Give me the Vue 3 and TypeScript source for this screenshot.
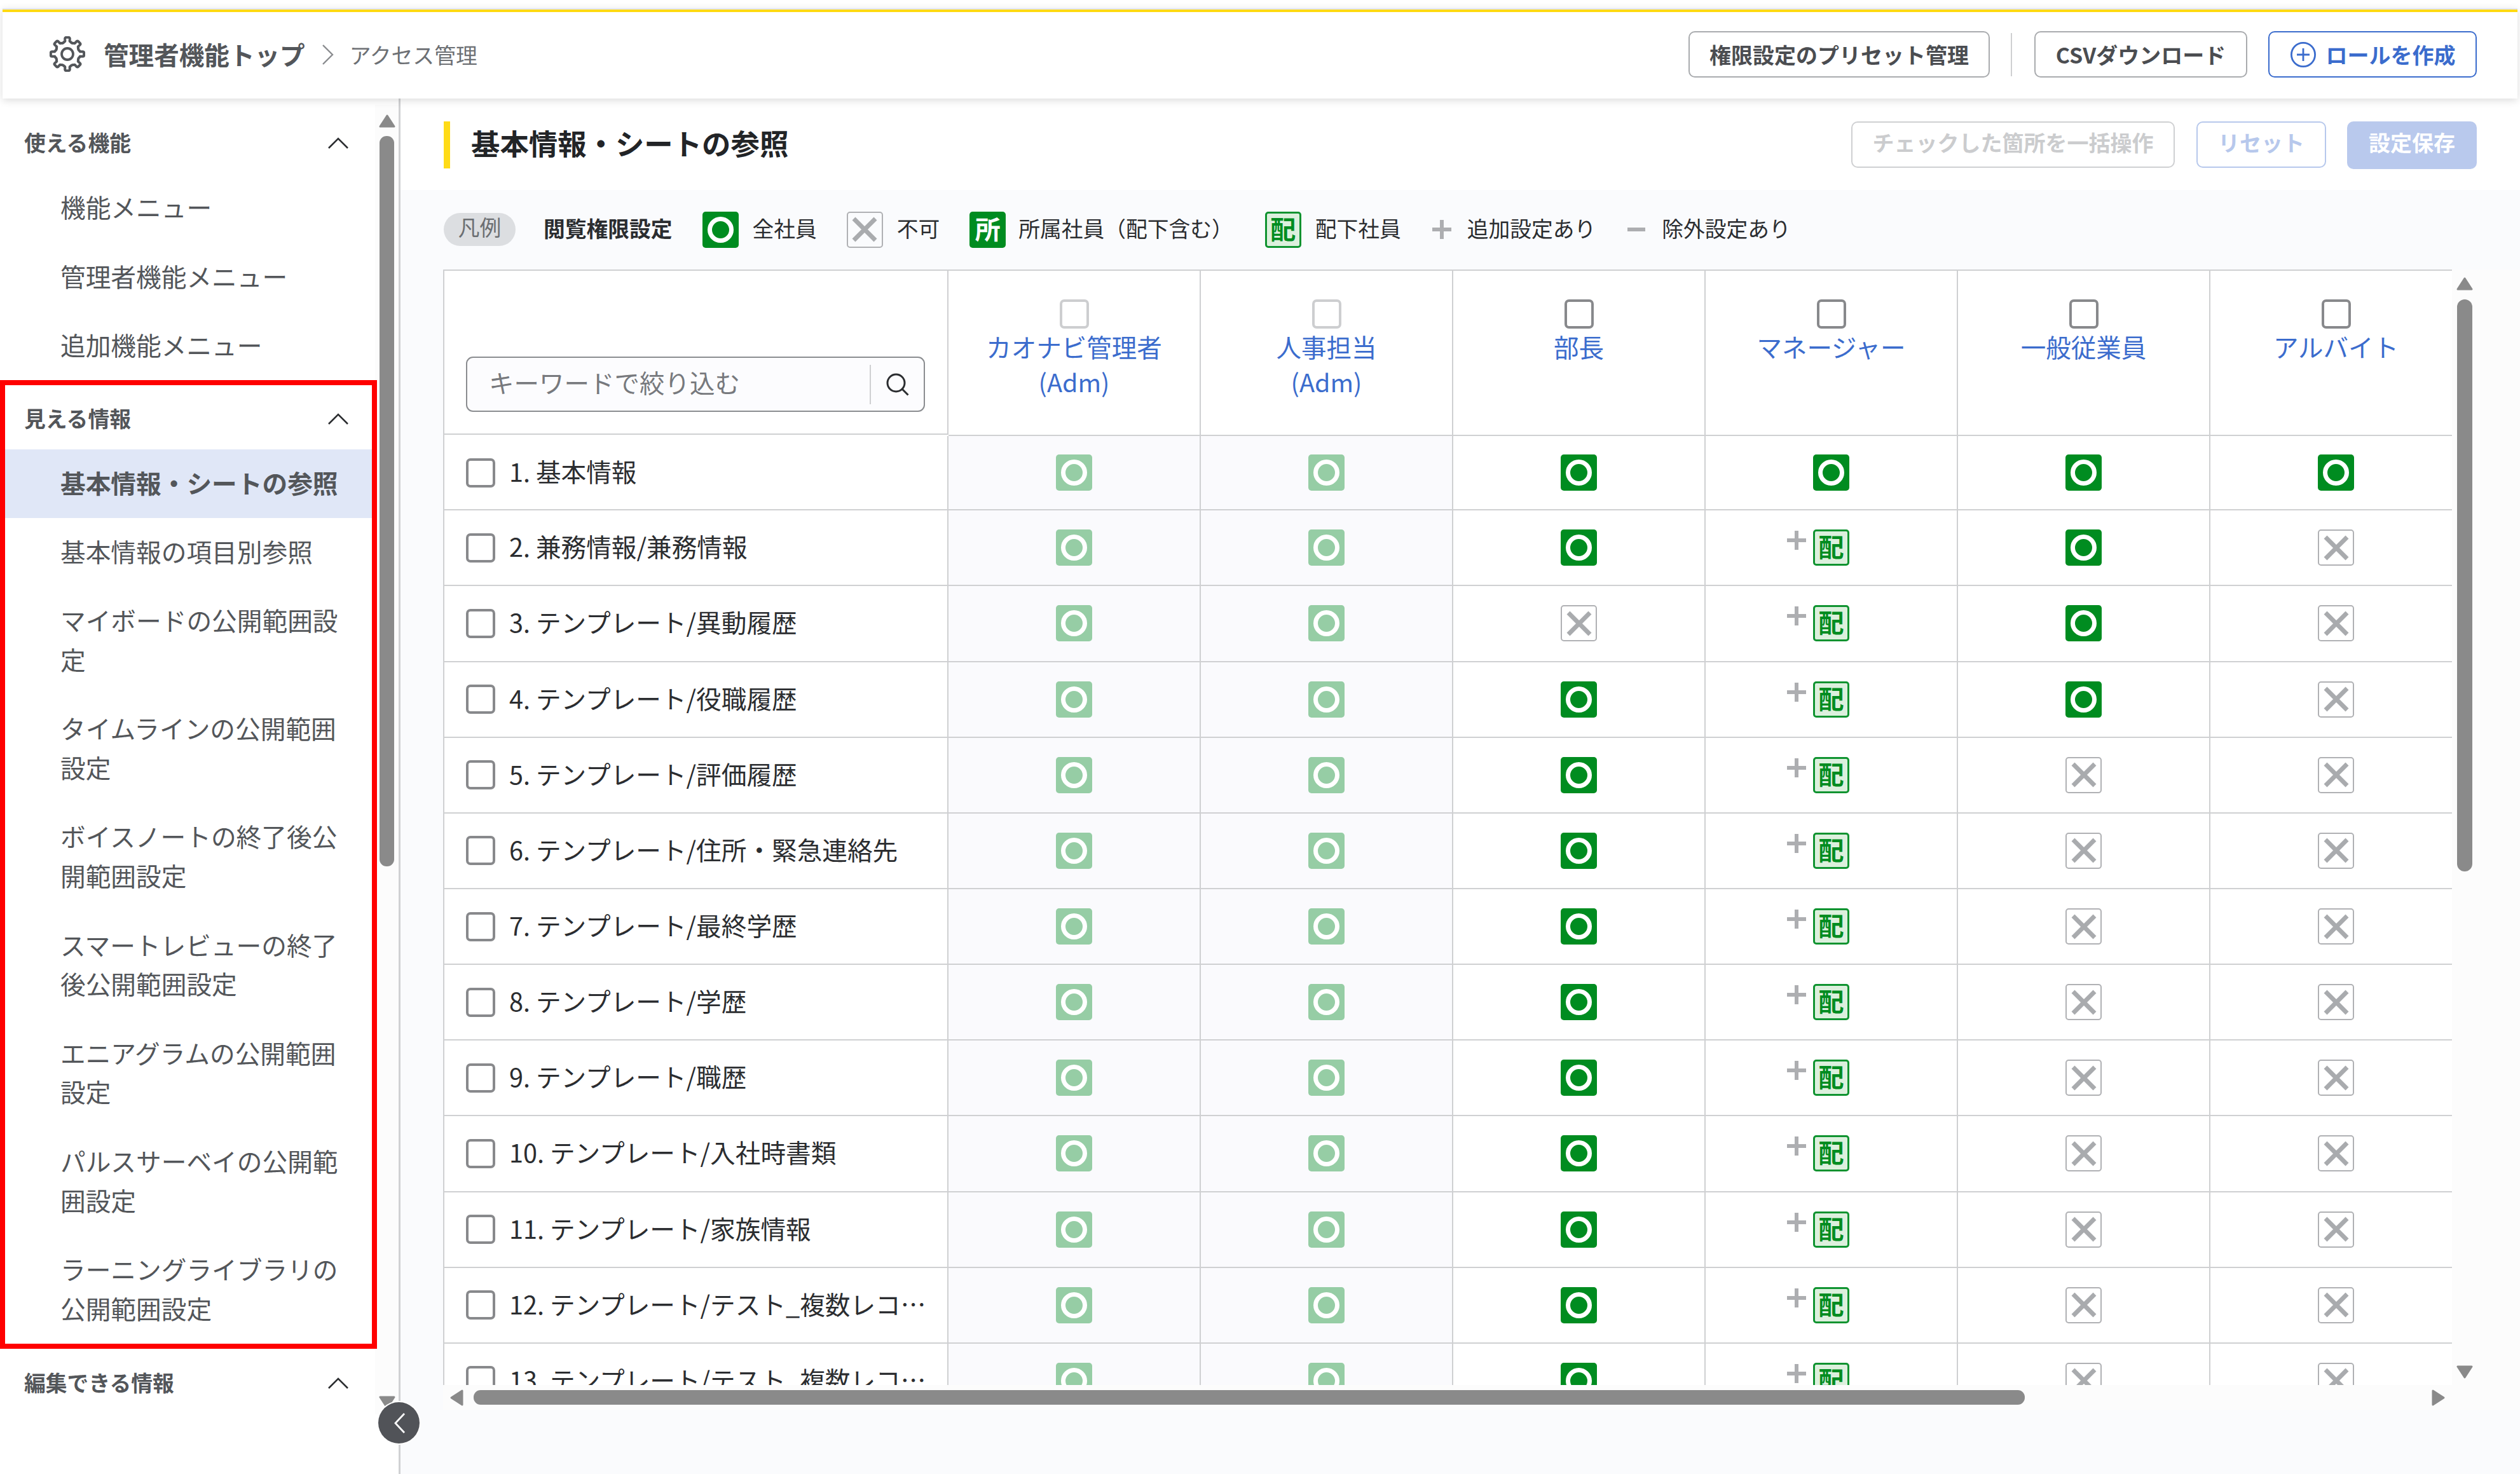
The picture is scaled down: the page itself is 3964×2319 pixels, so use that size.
<script setup lang="ts">
type Mark = 'all' | 'none' | 'sub'

interface MenuSection {
  title: string
  items: string[]
  highlighted?: boolean
}

interface Role {
  name: string
  suffix?: string
  locked?: boolean
}

const sections: MenuSection[] = [
  { title: '使える機能', items: ['機能メニュー', '管理者機能メニュー', '追加機能メニュー'] },
  {
    title: '見える情報',
    highlighted: true,
    items: [
      '基本情報・シートの参照',
      '基本情報の項目別参照',
      'マイボードの公開範囲設定',
      'タイムラインの公開範囲設定',
      'ボイスノートの終了後公開範囲設定',
      'スマートレビューの終了後公開範囲設定',
      'エニアグラムの公開範囲設定',
      'パルスサーベイの公開範囲設定',
      'ラーニングライブラリの公開範囲設定',
    ],
  },
  { title: '編集できる情報', items: [] },
]
const activeItem = '基本情報・シートの参照'

const roles: Role[] = [
  { name: 'カオナビ管理者', suffix: '(Adm)', locked: true },
  { name: '人事担当', suffix: '(Adm)', locked: true },
  { name: '部長' },
  { name: 'マネージャー' },
  { name: '一般従業員' },
  { name: 'アルバイト' },
]

const labels = [
  '基本情報',
  '兼務情報/兼務情報',
  'テンプレート/異動履歴',
  'テンプレート/役職履歴',
  'テンプレート/評価履歴',
  'テンプレート/住所・緊急連絡先',
  'テンプレート/最終学歴',
  'テンプレート/学歴',
  'テンプレート/職歴',
  'テンプレート/入社時書類',
  'テンプレート/家族情報',
  'テンプレート/テスト_複数レコ…',
  'テンプレート/テスト_複数レコ…',
]

const rows = labels.map((label, i) => ({
  label: `${i + 1}. ${label}`,
  marks: [
    'all',
    'all',
    i === 2 ? 'none' : 'all',
    i === 0 ? 'all' : 'sub',
    i < 4 ? 'all' : 'none',
    i === 0 ? 'all' : 'none',
  ] as Mark[],
}))

// Eight-toothed cog outline, centred on (28, 28)
function cogPath(): string {
  const pt = (r: number, deg: number) => {
    const a = (deg * Math.PI) / 180
    return `${(28 + r * Math.sin(a)).toFixed(2)} ${(28 - r * Math.cos(a)).toFixed(2)}`
  }
  let d = ''
  for (let k = 0; k < 8; k++) {
    const c = k * 45
    d += `${k === 0 ? 'M' : 'L'}${pt(20.2, c - 13)} `
    d += `Q${pt(19.6, c - 10)} ${pt(22.4, c - 9.5)} L${pt(24.6, c - 9)} `
    d += `Q${pt(26.4, c - 8)} ${pt(26.2, c - 4)} L${pt(26.2, c + 4)} `
    d += `Q${pt(26.4, c + 8)} ${pt(24.6, c + 9)} L${pt(22.4, c + 9.5)} `
    d += `Q${pt(19.6, c + 10)} ${pt(20.2, c + 13)} Q${pt(17.6, c + 22.5)} ${pt(20.2, c + 32)} `
  }
  return d + 'Z'
}
const cog = cogPath()
</script>

<template>
  <div class="app">
    <header class="topbar">
      <svg class="cog" viewBox="0 0 56 56">
        <path :d="cog" fill="none" stroke="#53565a" stroke-width="4" stroke-linejoin="round" />
        <circle cx="28" cy="28" r="9" fill="none" stroke="#53565a" stroke-width="3.8" />
      </svg>
      <span class="crumb-root">管理者機能トップ</span>
      <svg class="crumb-sep" viewBox="0 0 20 34">
        <path d="M2 2 L17 17 L2 32" fill="none" stroke="#8b8d90" stroke-width="2.4" />
      </svg>
      <span class="crumb-leaf">アクセス管理</span>
      <div class="actions">
        <button class="btn preset">権限設定のプリセット管理</button>
        <i class="split"></i>
        <button class="btn csv">CSVダウンロード</button>
        <button class="btn create">
          <svg viewBox="0 0 42 42">
            <circle cx="21" cy="21" r="18.6" fill="none" stroke="#3b6ccd" stroke-width="2.8" />
            <path d="M21 11V31M11 21H31" stroke="#3b6ccd" stroke-width="2.8" />
          </svg>
          <span>ロールを作成</span>
        </button>
      </div>
    </header>

    <div class="body">
      <aside class="sidebar">
        <nav class="menu">
          <section v-for="s in sections" :key="s.title" :class="['group', { boxed: s.highlighted }]">
            <h2 class="group-title">
              <span>{{ s.title }}</span>
              <svg viewBox="0 0 34 20">
                <path d="M2 18 L17 3 L32 18" fill="none" stroke="#2b2d30" stroke-width="2.6" />
              </svg>
            </h2>
            <a v-for="item in s.items" :key="item" :class="['item', { active: item === activeItem }]">{{ item }}</a>
          </section>
        </nav>
        <div class="side-scroll">
          <svg class="arrow" viewBox="0 0 26 21"><path d="M13 2 L24 19 H2 Z" /></svg>
          <div class="side-thumb"></div>
          <svg class="arrow side-down" viewBox="0 0 26 21"><path d="M2 2 H24 L13 19 Z" /></svg>
        </div>
        <button class="collapse">
          <svg viewBox="0 0 20 34"><path d="M17 2 L3 17 L17 32" fill="none" stroke="#fff" stroke-width="2.8" /></svg>
        </button>
      </aside>

      <main class="main">
        <div class="heading">
          <h1>基本情報・シートの参照</h1>
          <div class="heading-actions">
            <button class="btn bulk">チェックした箇所を一括操作</button>
            <button class="btn reset">リセット</button>
            <button class="btn save">設定保存</button>
          </div>
        </div>

        <div class="legend">
          <span class="chip">凡例</span>
          <b>閲覧権限設定</b>
          <span class="mark all g47"><i></i></span><span class="t g22">全社員</span>
          <span class="mark none g47"><svg viewBox="0 0 56 56"><path d="M11 11 L45 45 M45 11 L11 45" /></svg></span><span class="t g22">不可</span>
          <span class="mark own g47">所</span><span class="t g20">所属社員（配下含む）</span>
          <span class="mark sub g50">配</span><span class="t g22">配下社員</span>
          <svg class="sign g49" viewBox="0 0 30 30"><path d="M15 0V30M0 15H30" /></svg><span class="t g25">追加設定あり</span>
          <svg class="sign g49" viewBox="0 0 30 30"><path d="M1 15H29" /></svg><span class="t g25">除外設定あり</span>
        </div>

        <div class="grid-box">
          <div class="viewport">
            <div class="grid">
              <div class="row head">
                <div class="cell first">
                  <div class="search">
                    <span>キーワードで絞り込む</span>
                    <i></i>
                    <svg viewBox="0 0 38 38">
                      <circle cx="16.5" cy="16.5" r="13.5" />
                      <path d="M26 26 L35.5 35.5" />
                    </svg>
                  </div>
                </div>
                <div v-for="r in roles" :key="r.name" class="cell role">
                  <i :class="['check', { off: r.locked }]"></i>
                  <a>{{ r.name }}<template v-if="r.suffix"><br />{{ r.suffix }}</template></a>
                </div>
              </div>
              <div v-for="row in rows" :key="row.label" class="row">
                <div class="cell first">
                  <i class="check"></i>
                  <span class="label">{{ row.label }}</span>
                </div>
                <div v-for="(m, c) in row.marks" :key="c" :class="['cell', { locked: roles[c].locked }]">
                  <span v-if="m === 'all'" class="mark all"><i></i></span>
                  <span v-else-if="m === 'none'" class="mark none">
                    <svg viewBox="0 0 56 56"><path d="M11 11 L45 45 M45 11 L11 45" /></svg>
                  </span>
                  <span v-else class="mark sub">
                    配
                    <svg class="sign plus" viewBox="0 0 30 30"><path d="M15 0V30M0 15H30" /></svg>
                  </span>
                </div>
              </div>
            </div>
          </div>
          <div class="v-scroll">
            <svg class="arrow" viewBox="0 0 26 21"><path d="M13 2 L24 19 H2 Z" /></svg>
            <div class="v-thumb"></div>
            <svg class="arrow v-down" viewBox="0 0 26 21"><path d="M2 2 H24 L13 19 Z" /></svg>
          </div>
          <div class="h-scroll">
            <svg class="h-arrow" viewBox="0 0 21 26"><path d="M19 2 V24 L2 13 Z" /></svg>
            <div class="h-thumb"></div>
            <svg class="h-arrow h-right" viewBox="0 0 21 26"><path d="M2 2 V24 L19 13 Z" /></svg>
          </div>
        </div>
      </main>
    </div>
  </div>
</template>

<style>
body {
  margin: 0;
  background: #fff;
  overflow: hidden;
}
</style>

<style scoped>
.app {
  width: 3964px;
  height: 2319px;
  display: flex;
  flex-direction: column;
  overflow: hidden;
  font-family: 'Noto Sans CJK JP', 'Noto Sans', sans-serif;
  color: #2b2d30;
  background: #fff;
}
.app *,
.app *::after {
  box-sizing: border-box;
}
i {
  display: block;
  flex: none;
}
svg {
  display: block;
  flex: none;
}
button {
  font-family: inherit;
  padding: 0;
  margin: 0;
}

/* top bar */
.topbar {
  flex: none;
  height: 142px;
  margin: 13px 4px 0;
  padding: 1px 64px 0 74px;
  border-top: 2px solid #e3e7f5;
  box-shadow: inset 0 4px 0 #ffda12, 0 3px 12px rgba(0, 0, 0, 0.14);
  background: #fff;
  display: flex;
  align-items: center;
  position: relative;
  z-index: 2;
}
.cog {
  width: 56px;
  height: 56px;
  margin-bottom: 2px;
}
.crumb-root {
  margin-left: 29px;
  font-size: 39.6px;
  font-weight: 700;
  color: #53565a;
  padding-bottom: 3px;
}
.crumb-sep {
  width: 20px;
  height: 34px;
  margin-left: 26px;
}
.crumb-leaf {
  margin-left: 24px;
  font-size: 33.8px;
  color: #6d7074;
  padding-bottom: 1px;
}
.actions {
  margin-left: auto;
  display: flex;
  align-items: center;
}
.btn {
  height: 73px;
  border: 2px solid #a9abae;
  border-radius: 10px;
  background: #fff;
  color: #4b4d51;
  font-size: 34px;
  font-weight: 700;
  display: flex;
  align-items: center;
  justify-content: center;
  white-space: nowrap;
}
.preset {
  width: 474px;
}
.split {
  width: 2px;
  height: 68px;
  background: #cfd0d2;
  margin: 0 35px 0 33px;
}
.csv {
  width: 335px;
}
.create {
  width: 328px;
  margin-left: 33px;
  border-color: #3b6ccd;
  color: #3b6ccd;
}
.create svg {
  width: 42px;
  height: 42px;
  margin-right: 15px;
}

/* side menu */
.body {
  flex: 1;
  display: flex;
  min-height: 0;
}
.sidebar {
  width: 630px;
  flex: none;
  display: flex;
  border-right: 3px solid #d0d1d3;
  position: relative;
}
.menu {
  width: 590px;
  padding-top: 10px;
}
.group {
  position: relative;
}
.group.boxed::after {
  content: '';
  position: absolute;
  left: 0;
  top: 0;
  width: 593px;
  bottom: -8px;
  border: 8px solid #f00;
}
.group-title {
  margin: 0;
  height: 108.5px;
  padding: 9px 0 0 38px;
  display: flex;
  align-items: center;
  font-size: 33.8px;
  font-weight: 700;
  color: #53565a;
}
.group:last-child .group-title {
  padding-top: 12px;
}
.group-title svg {
  width: 34px;
  height: 20px;
  margin: 3px 41px 0 auto;
}
.item {
  display: block;
  padding: 20.75px 54px 25.75px 95px;
  font-size: 39.7px;
  line-height: 61.8px;
  color: #53565a;
  word-break: break-all;
  line-break: anywhere;
}
.item.active {
  background: #e0e7f7;
  font-weight: 700;
}
.side-scroll {
  width: 37px;
  height: 2060px;
  margin-top: 10px;
  padding-top: 15px;
  background: #fcfcfc;
  display: flex;
  flex-direction: column;
  align-items: center;
}
.arrow {
  width: 26px;
  height: 21px;
}
.arrow path,
.h-arrow path {
  fill: #8a8a8a;
  stroke: #8a8a8a;
  stroke-width: 3;
  stroke-linejoin: round;
}
.side-thumb {
  width: 23px;
  height: 1149px;
  margin-top: 13px;
  border-radius: 11px;
  background: #8a8a8a;
}
.side-down {
  margin-top: 833px;
}
.collapse {
  position: absolute;
  left: 595px;
  top: 2051px;
  width: 65px;
  height: 65px;
  border-radius: 50%;
  border: 0;
  background: #515358;
  box-shadow: 0 0 0 2px #fff;
  display: flex;
  align-items: center;
  justify-content: center;
}
.collapse svg {
  width: 20px;
  height: 34px;
  margin-left: 2px;
}

/* main area */
.main {
  flex: 1;
  min-width: 0;
  background: #fafbfd;
  display: flex;
  flex-direction: column;
}
.heading {
  flex: none;
  height: 144px;
  padding: 36px 68px 0;
  background: #fff;
  display: flex;
  align-items: flex-start;
  justify-content: space-between;
}
h1 {
  margin: 0;
  height: 74px;
  line-height: 66px;
  padding-left: 33px;
  border-left: 10px solid #ffdb17;
  font-size: 45.4px;
  font-weight: 700;
  color: #222427;
}
.heading-actions {
  display: flex;
  align-items: flex-start;
}
.heading-actions .btn {
  padding-bottom: 8px;
}
.bulk {
  width: 509px;
  border-color: #cfd0d2;
  color: #cbccce;
}
.reset {
  width: 204px;
  margin-left: 34px;
  border-color: #b7c8ec;
  color: #b7c8ec;
}
.heading-actions .save {
  width: 204px;
  height: 75px;
  margin-left: 33px;
  border: 0;
  padding-bottom: 10px;
  background: #b9c9ed;
  color: #fff;
}
.legend {
  flex: none;
  height: 125px;
  padding: 0 0 1px 68px;
  display: flex;
  align-items: center;
  font-size: 33.75px;
  line-height: 50px;
  white-space: nowrap;
}
.chip {
  width: 113px;
  height: 52px;
  border-radius: 26px;
  background: #dcdee1;
  color: #6b6e72;
  text-align: center;
  line-height: 44px;
}
.legend b {
  margin-left: 44px;
}
.legend b,
.legend .t {
  padding-bottom: 4px;
}
.g20 { margin-left: 20px; }
.g22 { margin-left: 22px; }
.g25 { margin-left: 25px; }
.g47 { margin-left: 47px; }
.g49 { margin-left: 49px; }
.g50 { margin-left: 50px; }

.mark {
  flex: none;
  width: 57px;
  height: 57px;
  border-radius: 5px;
  display: flex;
  align-items: center;
  justify-content: center;
  font-size: 40px;
  font-weight: 700;
  line-height: 52px;
  position: relative;
}
.mark.all {
  background: #008c20;
}
.mark.all i {
  width: 41px;
  height: 41px;
  border: 7px solid #fff;
  border-radius: 50%;
}
.mark.own {
  background: #008c20;
  color: #fff;
  padding-bottom: 5px;
}
.mark.sub {
  background: #dcf0dd;
  border: 3px solid #0f9330;
  color: #008c20;
  padding-bottom: 5px;
}
.mark.none {
  border: 2px solid #b0b1b4;
}
.mark.none svg {
  width: 56px;
  height: 56px;
}
.mark.none path {
  stroke: #a9abae;
  stroke-width: 7;
}
.sign {
  width: 30px;
  height: 30px;
}
.sign path {
  stroke: #adaeb1;
  stroke-width: 6;
}
.plus {
  position: absolute;
  left: -44px;
  top: -1px;
}

/* permission grid */
.grid-box {
  display: grid;
  grid-template-columns: 3160px 39px;
  grid-template-rows: 1755px 39px;
  margin-left: 67px;
  background: #fcfcfc;
}
.viewport {
  overflow: hidden;
  background: #fff;
  border-top: 2px solid #cfd0d2;
  border-left: 2px solid #cfd0d2;
}
.grid {
  width: 3175px;
}
.row {
  display: grid;
  grid-template-columns: 793px repeat(6, 397px);
  height: 119.15px;
}
.row.head {
  height: 260px;
}
.row:nth-child(2) {
  height: 117.25px;
}
.cell {
  border-right: 2px solid #cfd0d2;
  border-bottom: 2px solid #cfd0d2;
  display: flex;
  align-items: center;
  justify-content: center;
  min-width: 0;
}
.cell.first {
  justify-content: flex-start;
  padding-left: 34px;
}
.cell.locked {
  background: #fafafd;
}
.cell.locked .mark {
  background: #96cda5;
}
.head .first {
  height: 258px;
  align-items: flex-end;
  padding-bottom: 34px;
}
.head .role {
  flex-direction: column;
  justify-content: flex-start;
  padding-top: 45px;
}
.role a {
  margin-top: 1px;
  font-size: 39.5px;
  line-height: 54.5px;
  color: #3b6ccd;
  text-align: center;
}
.check {
  width: 46px;
  height: 46px;
  border: 4px solid #88898c;
  border-radius: 7px;
  background: #fff;
}
.check.off {
  border-color: #cdced0;
}
.label {
  margin-left: 22px;
  font-size: 39.65px;
  white-space: nowrap;
  padding-bottom: 6px;
}
.search {
  width: 722px;
  height: 87px;
  border: 2px solid #8b8d90;
  border-radius: 11px;
  background: #fcfcfe;
  display: flex;
  align-items: center;
  font-size: 39.5px;
  color: #77797d;
}
.search span {
  margin-left: 34px;
  padding-bottom: 9px;
}
.search i {
  width: 2px;
  height: 62px;
  margin-left: auto;
  background: #cfd0d2;
}
.search svg {
  width: 38px;
  height: 38px;
  margin: 0 22px 0 23px;
  fill: none;
  stroke: #2b2d30;
  stroke-width: 3;
}
.v-scroll {
  display: flex;
  flex-direction: column;
  align-items: center;
  padding-top: 12px;
}
.v-thumb {
  width: 24px;
  height: 900px;
  margin-top: 14px;
  border-radius: 12px;
  background: #8a8a8a;
}
.v-down {
  margin-top: auto;
  margin-bottom: 10px;
}
.h-scroll {
  grid-column: 1 / 3;
  display: flex;
  align-items: center;
  padding: 0 50px 0 11px;
}
.h-arrow {
  width: 21px;
  height: 26px;
}
.h-thumb {
  width: 2440px;
  height: 23px;
  margin-left: 16px;
  border-radius: 11px;
  background: #8a8a8a;
}
.h-right {
  margin-left: auto;
}
</style>
